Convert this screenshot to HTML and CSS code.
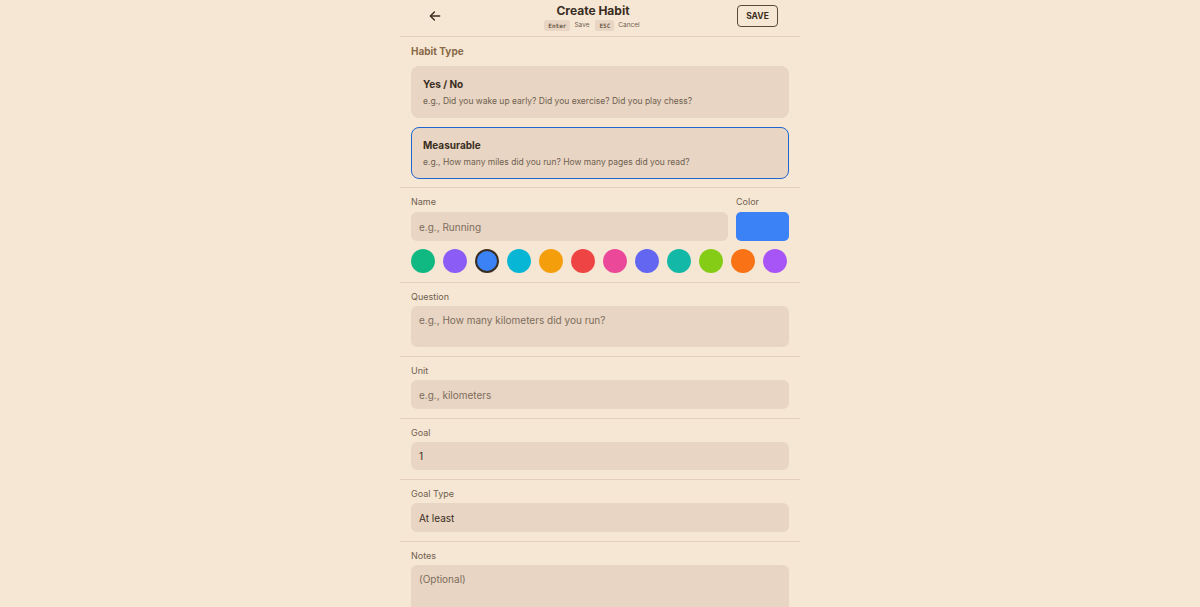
FILE: index.html
```html
<!DOCTYPE html>
<html lang="en">
<head>
  <meta charset="UTF-8" />
  <meta name="viewport" content="width=device-width, initial-scale=1.0"/>
  <title>Create Habit</title>
  <link rel="stylesheet" href="styles.css">
</head>
<body>
  <div class="sheet">
    <header class="topbar">
      <button class="back-btn" type="button" aria-label="Back">
        <svg width="14" height="14" viewBox="0 0 24 24" fill="none" stroke="currentColor" stroke-width="2.4" stroke-linecap="round" stroke-linejoin="round">
          <path d="M20 12H5"/>
          <path d="M11 5l-7 7 7 7"/>
        </svg>
      </button>
      <div class="title-block">
        <h1>Create Habit</h1>
        <div class="hints">
          <span class="kbd">Enter</span><span>Save</span>
          <span class="kbd">ESC</span><span>Cancel</span>
        </div>
      </div>
      <button class="save-btn" type="button">SAVE</button>
    </header>

    <section class="section types">
      <h2 class="section-title">Habit Type</h2>
      <div class="type-card">
        <div class="type-name">Yes / No</div>
        <div class="type-desc">e.g., Did you wake up early? Did you exercise? Did you play chess?</div>
      </div>
      <div class="type-card selected">
        <div class="type-name">Measurable</div>
        <div class="type-desc">e.g., How many miles did you run? How many pages did you read?</div>
      </div>
    </section>

    <section class="section">
      <div class="name-row">
        <div class="field grow">
          <label for="name">Name</label>
          <input id="name" type="text" placeholder="e.g., Running">
        </div>
        <div class="field">
          <label>Color</label>
          <div class="color-preview"></div>
        </div>
      </div>
      <div class="swatches">
        <span class="swatch" style="background:#10b981"></span>
        <span class="swatch" style="background:#8b5cf6"></span>
        <span class="swatch active" style="background:#3b82f6"></span>
        <span class="swatch" style="background:#06b6d4"></span>
        <span class="swatch" style="background:#f59e0b"></span>
        <span class="swatch" style="background:#ef4444"></span>
        <span class="swatch" style="background:#ec4899"></span>
        <span class="swatch" style="background:#6366f1"></span>
        <span class="swatch" style="background:#14b8a6"></span>
        <span class="swatch" style="background:#84cc16"></span>
        <span class="swatch" style="background:#f97316"></span>
        <span class="swatch" style="background:#a855f7"></span>
      </div>
    </section>

    <section class="section">
      <label for="question">Question</label>
      <textarea id="question" class="tall" placeholder="e.g., How many kilometers did you run?"></textarea>
    </section>

    <section class="section">
      <label for="unit">Unit</label>
      <input id="unit" type="text" placeholder="e.g., kilometers">
    </section>

    <section class="section">
      <label for="goal">Goal</label>
      <input id="goal" type="text" value="1">
    </section>

    <section class="section">
      <label for="goalType">Goal Type</label>
      <div class="select">At least</div>
    </section>

    <section class="section last">
      <label for="notes">Notes</label>
      <textarea id="notes" class="notes" placeholder="(Optional)"></textarea>
    </section>
  </div>
</body>
</html>
```

FILE: styles.css
```css
:root {
  --page-bg: #f6e7d4;
  --field-bg: #e8d5c3;
  --line: #e3cfba;
  --text: #3a2d22;
  --muted: #6f6050;
  --accent: #8a6a48;
  --blue: #1f66d1;
}

* {
  box-sizing: border-box;
}

body {
  margin: 0;
  background: var(--page-bg);
  color: var(--text);
  font-family: Inter, "Noto Sans", sans-serif;
}

.sheet {
  width: 400px;
  margin: 0 auto;
}

.topbar {
  display: flex;
  align-items: center;
  height: 37px;
  padding: 0 22px 0 21px;
  border-bottom: 1px solid var(--line);
}

.back-btn {
  width: 28px;
  height: 28px;
  display: flex;
  align-items: center;
  justify-content: center;
  border: none;
  background: none;
  color: var(--text);
  padding: 0;
  margin-top: -4px;
  cursor: pointer;
}

.title-block {
  flex: 1;
  text-align: center;
  margin-top: -3px;
}

.title-block h1 {
  margin: 0;
  font-size: 12px;
  font-weight: 700;
  line-height: 15px;
}

.hints {
  display: flex;
  justify-content: center;
  align-items: center;
  gap: 4px;
  margin-top: 2px;
  font-size: 6.5px;
  color: var(--muted);
}

.kbd {
  background: var(--field-bg);
  border-radius: 2px;
  padding: 2px 4px;
  font-family: "DejaVu Sans Mono", monospace;
  font-size: 6px;
  font-weight: 700;
  line-height: 7px;
  color: #6d5d4c;
}

.hints .kbd + span {
  margin-right: 2px;
}

.save-btn {
  width: 41px;
  height: 22px;
  margin-top: -4px;
  border: 1.5px solid #5a4838;
  border-radius: 4px;
  background: none;
  color: var(--text);
  font-family: inherit;
  font-size: 8.5px;
  font-weight: 700;
  padding: 0;
  cursor: pointer;
}

.section {
  padding: 8px 11px 9px;
  border-bottom: 1px solid var(--line);
}

.section.types {
  padding: 7px 11px 8px;
}

.section.last {
  border-bottom: none;
}

.section-title {
  margin: 0 0 8px;
  font-size: 10px;
  font-weight: 700;
  color: var(--accent);
  line-height: 14px;
}

.type-card {
  height: 52px;
  background: var(--field-bg);
  border: 1.5px solid transparent;
  border-radius: 8px;
  padding: 10px 11px 0;
}

.type-card + .type-card {
  margin-top: 9px;
}

.type-card.selected {
  border-color: var(--blue);
}

.type-name {
  font-size: 10px;
  font-weight: 700;
  line-height: 14px;
}

.type-desc {
  margin-top: 5px;
  font-size: 8.5px;
  color: var(--muted);
  line-height: 11px;
}

label {
  display: block;
  font-size: 9px;
  line-height: 12px;
  color: var(--muted);
  margin-bottom: 3px;
}

.name-row label {
  margin-bottom: 4px;
}

input,
textarea,
.select {
  display: block;
  width: 100%;
  height: 28.5px;
  border: none;
  border-radius: 6px;
  background: var(--field-bg);
  color: var(--text);
  font-family: inherit;
  font-size: 10px;
  padding: 1px 8px 0;
  outline: none;
}

input::placeholder,
textarea::placeholder {
  color: #7d6d5d;
}

textarea {
  resize: none;
  padding: 8px;
  line-height: 13px;
}

textarea.tall {
  height: 41px;
}

textarea.notes {
  height: 60px;
}

.select {
  display: flex;
  align-items: center;
}

.name-row {
  display: flex;
  gap: 8px;
}

.field.grow {
  flex: 1;
}

.color-preview {
  width: 53px;
  height: 29px;
  border-radius: 5px;
  background: #3b82f6;
}

.swatches {
  display: flex;
  gap: 8px;
  margin-top: 8px;
}

.swatch {
  width: 24px;
  height: 24px;
  border-radius: 50%;
}

.swatch.active {
  border: 2px solid #3a2d22;
}
```
